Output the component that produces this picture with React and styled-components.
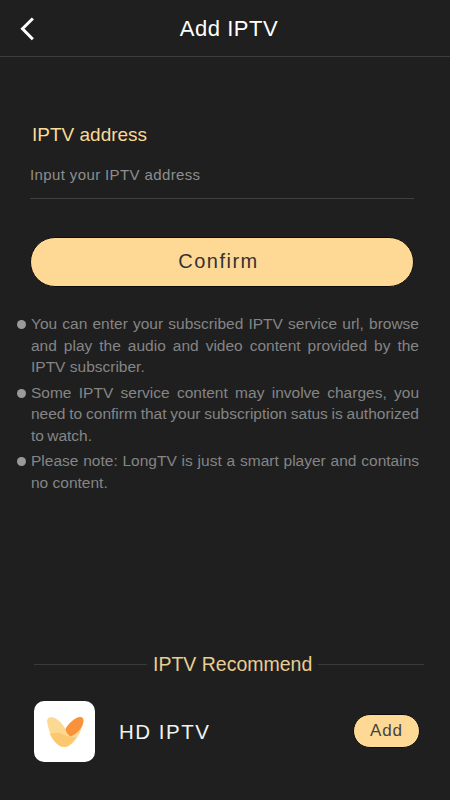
import React from "react";
import styled, { createGlobalStyle } from "styled-components";

const Global = createGlobalStyle`
  html, body { margin: 0; padding: 0; background: #1f1f1f; }
  body { font-family: "Liberation Sans", Arial, sans-serif; }
  * { box-sizing: border-box; }
`;

const Page = styled.div`
  width: 450px;
  height: 800px;
  background: #1f1f1f;
  display: flex;
  flex-direction: column;
  overflow: hidden;
`;

const Header = styled.header`
  height: 57px;
  flex: none;
  position: relative;
  display: flex;
  align-items: center;
  justify-content: center;
  padding: 2px 0 0 8px;
  border-bottom: 1px solid #3d3d3d;
`;

const BackButton = styled.button`
  position: absolute;
  left: 17px;
  top: 15px;
  width: 20px;
  height: 28px;
  padding: 0;
  border: 0;
  background: none;
  display: block;
`;

const Title = styled.h1`
  margin: 0;
  font-size: 22px;
  font-weight: 400;
  color: #fff;
  letter-spacing: 0.55px;
`;

const Form = styled.section`
  padding: 66px 36px 0 30px;
  display: flex;
  flex-direction: column;
`;

const Label = styled.label`
  font-size: 19px;
  line-height: 24px;
  color: #fbd996;
  padding-left: 2px;
`;

const Input = styled.input`
  margin-top: 15px;
  height: 37px;
  width: 100%;
  padding: 0 0 12px;
  border: 0;
  border-bottom: 1px solid #3f3f3f;
  background: none;
  outline: none;
  font: 400 15px "Liberation Sans", Arial, sans-serif;
  letter-spacing: 0.38px;
  color: #8e8e8e;
  &::placeholder { color: #8e8e8e; opacity: 1; }
`;

const Confirm = styled.button`
  margin-top: 38px;
  height: 50px;
  width: 100%;
  border: 1px solid #0d0d0d;
  border-radius: 25px;
  background: #fdd995;
  color: #333;
  font: 400 20px "Liberation Sans", Arial, sans-serif;
  letter-spacing: 1.5px;
  padding: 0 7px 1px 0;
`;

const Notes = styled.ul`
  list-style: none;
  margin: 26px 31px 0 31px;
  padding: 0;
`;

const Note = styled.li`
  position: relative;
  margin-bottom: 3.4px;
  font-size: 15.5px;
  line-height: 21.7px;
  color: #858585;
  text-align: justify;
  word-spacing: ${(p) => (p.$tight ? "-1px" : "0")};
  &::before {
    content: "";
    position: absolute;
    left: -14px;
    top: 7px;
    width: 9px;
    height: 9px;
    border-radius: 50%;
    background: #9a9a9a;
  }
`;

const Recommend = styled.section`
  margin-top: auto;
  padding: 0 26px 38px 34px;
`;

const DividerRow = styled.div`
  display: flex;
  align-items: center;
  gap: 6px;
  &::before, &::after {
    content: "";
    height: 1px;
    background: #3a3a3a;
  }
  &::before { flex: 0 0 113px; }
  &::after { flex: 1; }
`;

const DividerText = styled.span`
  font-size: 19.5px;
  line-height: 24px;
  color: #e9cd92;
`;

const AppRow = styled.div`
  margin-top: 25px;
  padding-right: 4px;
  display: flex;
  align-items: center;
`;

const AppIcon = styled.div`
  width: 61px;
  height: 61px;
  flex: none;
  border-radius: 10px;
  background: #fff;
  display: flex;
  align-items: center;
  justify-content: center;
`;

const AppName = styled.span`
  margin-left: 24px;
  font-size: 20.5px;
  color: #f2f2f2;
  letter-spacing: 1.5px;
  flex: 1;
`;

const AddButton = styled.button`
  width: 67px;
  height: 34px;
  margin-bottom: 2px;
  border: 1px solid #0d0d0d;
  border-radius: 17px;
  background: #fdd995;
  color: #444;
  font: 400 17px "Liberation Sans", Arial, sans-serif;
  letter-spacing: 0.9px;
  padding: 0;
`;

const Logo = () => (
  <svg width="40" height="33" viewBox="0 0 40 33" aria-hidden="true">
    <path d="M2.200 7.500C1.500 3 5 1.500 9 2.800 13.500 4.500 17.500 9 20.500 14 24 8 29.500 3 34.500 2 38.500 1.500 39 5 38 8.500 35.500 19 28 32 19.500 32 11.500 32 4.500 20 2.200 7.500Z" fill="#fbd992" />
    <path d="M4.500 18.500C7 19 9 17.500 12 17.500 16.500 17.500 20 21.500 25.500 21.500 27.500 22.500 29.500 22.500 31 21.800 27.500 27.500 23.500 32 19.500 32 13 32 8 25.500 4.500 18.500Z" fill="#fbc76f" />
    <path d="M20.500 14C24 8 29.500 3 34.500 2 38.500 1.500 39 5 38 8.500 36.800 13.500 31.500 19.500 25.500 21.500 22.800 20 21 17 20.500 14Z" fill="#f9923a" />
  </svg>
);

export default function App() {
  return (
    <Page>
      <Global />
      <Header>
        <BackButton aria-label="Back">
          <svg width="20" height="28" viewBox="0 0 20 28" fill="none">
            <path d="M14.800 4.500 5.500 13.800 14.800 23.200" stroke="#fff" strokeWidth="3" strokeLinecap="square" />
          </svg>
        </BackButton>
        <Title>Add IPTV</Title>
      </Header>
      <Form>
        <Label htmlFor="addr">IPTV address</Label>
        <Input id="addr" placeholder="Input your IPTV address" />
        <Confirm>Confirm</Confirm>
      </Form>
      <Notes>
        <Note>You can enter your subscribed IPTV service url, browse and play the audio and video content provided by the IPTV subscriber.</Note>
        <Note $tight>Some IPTV service content may involve charges, you need to confirm that your subscription satus is authorized to watch.</Note>
        <Note>Please note: LongTV is just a smart player and contains no content.</Note>
      </Notes>
      <Recommend>
        <DividerRow>
          <DividerText>IPTV Recommend</DividerText>
        </DividerRow>
        <AppRow>
          <AppIcon><Logo /></AppIcon>
          <AppName>HD IPTV</AppName>
          <AddButton>Add</AddButton>
        </AppRow>
      </Recommend>
    </Page>
  );
}
